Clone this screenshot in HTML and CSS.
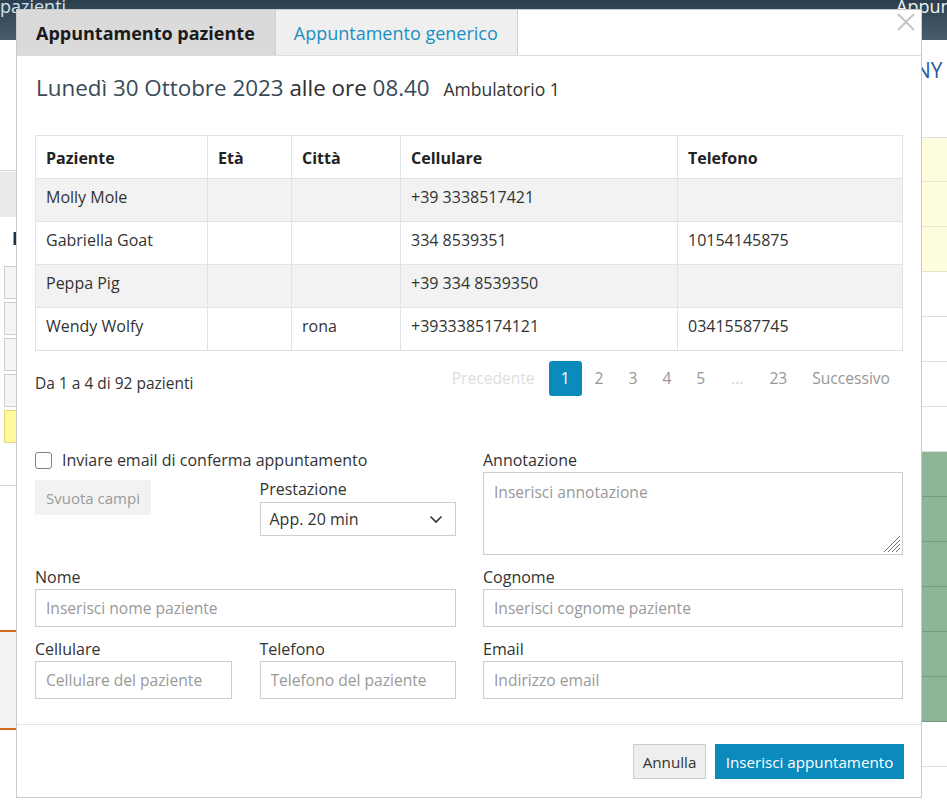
FILE: index.html
```html
<!DOCTYPE html>
<html lang="it">
<head>
<meta charset="utf-8">
<title>Appuntamento paziente</title>
<link rel="stylesheet" href="styles.css">
</head>
<body>
<div class="page">
  <header class="topbar">
    <span class="topbar-title">pazienti</span>
    <span class="topbar-right">Appuntamenti</span>
  </header>
  <div class="page-main">
    <aside class="left-strip">
      <div class="ls-sep"></div>
      <div class="ls-gray"></div>
      <div class="ls-d">D</div>
      <div class="ls-box first"></div>
      <div class="ls-box"></div>
      <div class="ls-box"></div>
      <div class="ls-box"></div>
      <div class="ls-box yellow"></div>
      <div class="ls-line"></div>
      <div class="ls-orange"></div>
    </aside>
    <div class="center"></div>
    <aside class="right-strip">
      <div class="rs-ny">NY</div>
      <div class="rs-rows">
        <div class="rs-row y first"></div>
        <div class="rs-row y"></div>
        <div class="rs-row y"></div>
        <div class="rs-row"></div>
        <div class="rs-row"></div>
        <div class="rs-row"></div>
        <div class="rs-row"></div>
        <div class="rs-row g"></div>
        <div class="rs-row g"></div>
        <div class="rs-row g"></div>
        <div class="rs-row g"></div>
        <div class="rs-row g"></div>
        <div class="rs-row g"></div>
        <div class="rs-row"></div>
      </div>
    </aside>
  </div>
</div>

<div class="modal">
  <div class="modal-tabs">
    <button class="tab active" type="button">Appuntamento paziente</button>
    <button class="tab" type="button">Appuntamento generico</button>
    <button class="close" type="button" aria-label="Chiudi">
      <svg width="20" height="20" viewBox="0 0 20 20"><path d="M2 2 L18 18 M18 2 L2 18" stroke="#c4c4c4" stroke-width="2" fill="none"/></svg>
    </button>
  </div>

  <div class="modal-body">
    <h2 class="title"><span class="date">Lunedì 30 Ottobre 2023</span> alle ore <span class="date">08.40</span> <small class="room">Ambulatorio 1</small></h2>

    <table class="patients">
      <thead>
        <tr><th class="c-name">Paziente</th><th class="c-age">Età</th><th class="c-city">Città</th><th class="c-cell">Cellulare</th><th class="c-tel">Telefono</th></tr>
      </thead>
      <tbody>
        <tr><td>Molly Mole</td><td></td><td></td><td>+39 3338517421</td><td></td></tr>
        <tr><td>Gabriella Goat</td><td></td><td></td><td>334 8539351</td><td>10154145875</td></tr>
        <tr><td>Peppa Pig</td><td></td><td></td><td>+39 334 8539350</td><td></td></tr>
        <tr><td>Wendy Wolfy</td><td></td><td>rona</td><td>+3933385174121</td><td>03415587745</td></tr>
      </tbody>
    </table>

    <div class="table-foot">
      <div class="info">Da 1 a 4 di 92 pazienti</div>
      <ul class="pager">
        <li class="disabled">Precedente</li>
        <li class="active">1</li>
        <li>2</li>
        <li>3</li>
        <li>4</li>
        <li>5</li>
        <li class="dots">…</li>
        <li>23</li>
        <li>Successivo</li>
      </ul>
    </div>

    <form class="form">
      <label class="check">
        <input type="checkbox" class="check-box">
        <span>Inviare email di conferma appuntamento</span>
      </label>

      <div class="field note">
        <span class="lbl">Annotazione</span>
        <textarea class="textarea" placeholder="Inserisci annotazione"></textarea>
      </div>

      <div class="clear-wrap">
        <button type="button" class="btn-clear">Svuota campi</button>
      </div>

      <div class="field service">
        <span class="lbl">Prestazione</span>
        <div class="select">
          <span>App. 20 min</span>
          <svg width="14" height="9" viewBox="0 0 14 9"><path d="M1.5 1.5 L7 7 L12.5 1.5" stroke="#333" stroke-width="1.6" fill="none"/></svg>
        </div>
      </div>

      <div class="field wide gap">
        <span class="lbl">Nome</span>
        <input class="input" type="text" placeholder="Inserisci nome paziente">
      </div>
      <div class="field gap">
        <span class="lbl">Cognome</span>
        <input class="input" type="text" placeholder="Inserisci cognome paziente">
      </div>

      <div class="field gap">
        <span class="lbl">Cellulare</span>
        <input class="input" type="text" placeholder="Cellulare del paziente">
      </div>
      <div class="field gap">
        <span class="lbl">Telefono</span>
        <input class="input" type="text" placeholder="Telefono del paziente">
      </div>
      <div class="field gap">
        <span class="lbl">Email</span>
        <input class="input" type="text" placeholder="Indirizzo email">
      </div>
    </form>
  </div>

  <div class="modal-footer">
    <button type="button" class="btn-cancel">Annulla</button>
    <button type="button" class="btn-primary">Inserisci appuntamento</button>
  </div>
</div>
</body>
</html>
```

FILE: styles.css
```css
* { box-sizing: border-box; }

html, body {
  margin: 0;
  padding: 0;
}

body {
  width: 947px;
  height: 800px;
  overflow: hidden;
  position: relative;
  background: #fff;
  font-family: "Open Sans", "Noto Sans", sans-serif;
  color: #333;
}

/* ---------- background page ---------- */
.topbar {
  height: 40px;
  background: linear-gradient(#2c3f4e, #485d6b);
  display: grid;
  grid-template-columns: 896px auto;
  overflow: hidden;
  white-space: nowrap;
}
.topbar-title,
.topbar-right {
  font-size: 18px;
  line-height: 18px;
  margin-top: -3px;
  color: #cfe2ee;
}
.topbar-right { color: #eef3f6; }

.page-main {
  display: grid;
  grid-template-columns: 16px 1fr 26px;
}

.left-strip { display: flex; flex-direction: column; }
.ls-sep { margin-top: 130px; border-top: 1px solid #d2d2d2; }
.ls-gray { margin-top: 1px; height: 45px; background: #ebebeb; }
.ls-d {
  margin-top: 11px;
  padding-left: 12px;
  font-weight: 700;
  font-size: 17px;
  line-height: 22px;
  color: #1c2f44;
  overflow: hidden;
  white-space: nowrap;
}
.ls-box {
  margin: 3px 0 0 4px;
  height: 33px;
  border: 1px solid #cfcfcf;
  border-right: 0;
  background: #f5f5f5;
}
.ls-box.first { margin-top: 16px; }
.ls-box.yellow { background: #fff99c; border-color: #e2d978; }
.ls-line { margin-top: 42px; border-top: 1px solid #d0d0d0; }
.ls-orange {
  margin-top: 144px;
  height: 100px;
  background: #f3f3f3;
  border-top: 2px solid #d56b1c;
  border-bottom: 2px solid #d56b1c;
}

.right-strip { display: flex; flex-direction: column; }
.rs-ny {
  margin-top: 18px;
  margin-left: -6px;
  font-size: 21px;
  line-height: 24px;
  color: #2d5aa0;
  white-space: nowrap;
}
.rs-rows { margin-top: 55px; }
.rs-row {
  height: 45px;
  border-bottom: 1px solid #dcdcdc;
}
.rs-row.first { border-top: 1px solid #e0e0e0; }
.rs-row.y { background: #fffddf; border-bottom-color: #e6e4cc; }
.rs-row.g { background: #8fb598; border-bottom-color: #769c80; }

/* ---------- modal ---------- */
.modal {
  position: absolute;
  left: 16px;
  top: 9px;
  width: 906px;
  height: 789px;
  background: #fff;
  border: 1px solid #c9c9c9;
  display: flex;
  flex-direction: column;
}

.modal-tabs {
  height: 46px;
  display: flex;
  align-items: stretch;
  border-bottom: 1px solid #dedede;
}
.tab {
  font-family: inherit;
  font-size: 18px;
  border: 0;
  border-right: 1px solid #cfcfcf;
  background: #efefef;
  color: #1a8fc1;
  padding: 0 19px 0 18px;
  margin: 0;
  cursor: pointer;
}
.tab.active {
  background: #dadada;
  color: #1a1a1a;
  font-weight: 700;
  padding: 0 20px 0 19px;
}
.close {
  margin-left: auto;
  margin-right: 3px;
  align-self: flex-start;
  margin-top: 0;
  border: 0;
  background: transparent;
  padding: 0;
  width: 24px;
  height: 24px;
  display: flex;
  align-items: center;
  justify-content: center;
}

.modal-body {
  padding: 0 18px;
}

.title {
  margin: 16px 0 30px 1px;
  font-weight: 400;
  font-size: 22.4px;
  line-height: 32px;
  color: #2d2d2d;
}
.title .date { color: #394a57; }
.title .room {
  font-size: 17.5px;
  color: #333;
  margin-left: 8px;
}

.patients {
  width: 100%;
  border-collapse: collapse;
  font-size: 16px;
  line-height: 24px;
  table-layout: fixed;
}
.patients th,
.patients td {
  border: 1px solid #dfe2e6;
  text-align: left;
  padding: 6px 10px 12px;
  vertical-align: top;
  white-space: nowrap;
}
.patients th {
  font-weight: 700;
  color: #222;
  padding: 10px 10px 8px;
}
.patients tbody tr:nth-child(odd) td { background: #f2f2f2; }
.c-name { width: 172px; }
.c-age { width: 84px; }
.c-city { width: 109px; }
.c-cell { width: 277px; }

.table-foot {
  margin-top: 10px;
  display: flex;
  justify-content: space-between;
  align-items: flex-start;
}
.info {
  font-size: 15.5px;
  line-height: 22px;
  margin-top: 11px;
  color: #333;
}
.pager {
  list-style: none;
  margin: 0 1px 0 0;
  padding: 0;
  display: flex;
  font-size: 15.6px;
}
.pager li {
  height: 35px;
  line-height: 35px;
  padding: 0 12px;
  margin-left: 1px;
  color: #979797;
  border-radius: 3px;
}
.pager li.disabled { color: #dedede; margin-right: 1px; }
.pager li.active { background: #0b8bbd; color: #fff; }
.pager li.dots { color: #cfcfcf; padding: 0 13px; }

/* ---------- form ---------- */
.form {
  margin-top: 53px;
  display: grid;
  grid-template-columns: 197px 196px 420px;
  grid-template-rows: 22px auto;
  justify-content: space-between;
  align-items: start;
}
.check {
  grid-column: 1 / 3;
  grid-row: 1;
  display: flex;
  align-items: center;
  height: 22px;
  font-size: 16px;
  color: #333;
}
.check-box {
  appearance: none;
  -webkit-appearance: none;
  width: 17px;
  height: 17px;
  margin: 0 10px 0 0;
  border: 1.5px solid #83808f;
  border-radius: 3px;
  background: #fff;
}

.field { display: flex; flex-direction: column; }
.lbl {
  font-size: 16px;
  line-height: 22px;
  margin-bottom: 1px;
  color: #333;
}
.note { grid-column: 3; grid-row: 1 / 3; }
.textarea {
  height: 83px;
  border: 1px solid #cdcdcd;
  font-family: inherit;
  font-size: 15.6px;
  padding: 8px 10px;
  color: #333;
  resize: none;
  background:
    linear-gradient(135deg, #fff 50%, transparent 50%) right 2px bottom 2px / 16px 16px no-repeat,
    repeating-linear-gradient(135deg, transparent 0 1.9px, #707070 1.9px 2.9px) right 2px bottom 2px / 16px 16px no-repeat,
    #fff;
}
.textarea::placeholder { color: #999; }

.clear-wrap { grid-column: 1; grid-row: 2; padding-top: 9px; }
.btn-clear {
  height: 35px;
  width: 116px;
  border: 0;
  background: #f2f2f2;
  color: #9a9a9a;
  font-family: inherit;
  font-size: 15px;
  padding: 0;
}

.service { grid-column: 2; grid-row: 2; padding-top: 7px; }
.service .lbl { margin-bottom: 2px; }
.select {
  height: 34px;
  border: 1px solid #cdcdcd;
  display: flex;
  align-items: center;
  justify-content: space-between;
  padding: 0 12px 0 9px;
  font-size: 16px;
  color: #333;
}

.wide { grid-column: 1 / 3; }
.gap { margin-top: 11px; }

.input {
  height: 38px;
  border: 1px solid #cdcdcd;
  font-family: inherit;
  font-size: 15.6px;
  padding: 0 10px;
  color: #333;
  width: 100%;
}
.input::placeholder { color: #999; }

/* ---------- footer ---------- */
.modal-footer {
  margin-top: auto;
  border-top: 1px solid #e3e3e3;
  padding: 19px 17px 18px;
  display: flex;
  justify-content: flex-end;
  gap: 9px;
}
.btn-cancel,
.btn-primary {
  height: 35px;
  font-family: inherit;
  font-size: 15.2px;
  padding: 0 6px;
  white-space: nowrap;
}
.btn-cancel {
  background: #eeeeee;
  border: 1px solid #cccccc;
  color: #333;
  width: 73px;
}
.btn-primary {
  background: #0b8bbd;
  border: 1px solid #0b8bbd;
  color: #fff;
  width: 189px;
}
```
